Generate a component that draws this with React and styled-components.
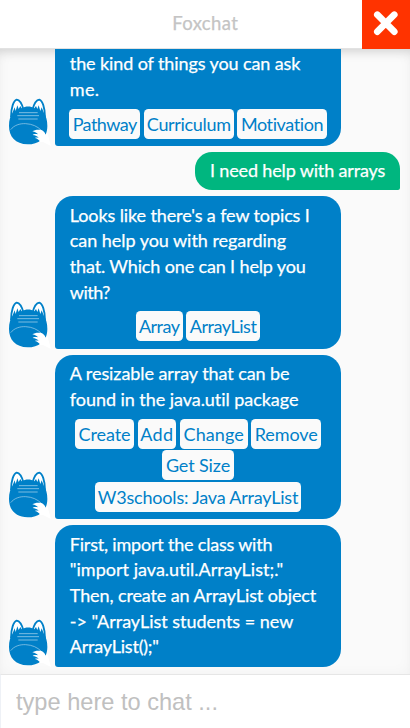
import React from 'react';
import styled, { createGlobalStyle } from 'styled-components';

const BLUE = '#0080c8';

const GlobalStyle = createGlobalStyle`
  * { box-sizing: border-box; }
  body { margin: 0; background: #fff; }
`;

const Window = styled.div`
  width: 410px;
  height: 728px;
  display: flex;
  flex-direction: column;
  overflow: hidden;
  background: #fff;
  font-family: Lato, "Liberation Sans", sans-serif;
  font-size: 18px;
  line-height: 25.7px;
`;

const Header = styled.header`
  flex: none;
  height: 49px;
  display: grid;
  grid-template-columns: 361.5px 1fr;
  border-bottom: 1px solid #e2e2e2;
`;

const Title = styled.h1`
  margin: 0;
  padding: 0 0 0 49px;
  font-size: 18.5px;
  font-weight: 400;
  line-height: 47px;
  letter-spacing: 0.4px;
  text-align: center;
  color: #c4c4c4;
  -webkit-text-stroke: 0.25px #c4c4c4;
`;

const CloseButton = styled.button`
  height: 48.5px;
  padding: 0;
  border: 0;
  display: grid;
  place-items: center;
  background: #ff3300;
`;

const Messages = styled.main`
  flex: none;
  height: 625px;
  padding: 0 10px 7.4px 8px;
  display: flex;
  flex-direction: column;
  justify-content: flex-end;
  gap: 6px;
  overflow: hidden;
  background: #fafafa;
  box-shadow: inset 0 10px 12px -8px rgba(0, 0, 0, 0.16), inset 0 0 14px rgba(0, 0, 0, 0.035);
`;

const BotRow = styled.div`
  flex: none;
  display: flex;
  align-items: flex-end;
  gap: 4.3px;
`;

const Avatar = styled.svg`
  flex: none;
  display: block;
  width: 43px;
  height: 48px;
`;

const Bubble = styled.div`
  width: 285.4px;
  padding: ${(p) => (p.$scrolled ? '40px' : '6.5px')} 14.5px 6.5px;
  border-radius: 18px 18px 18px 3px;
  color: #fff;
  background: ${BLUE};
`;

const UserBubble = styled.div`
  flex: none;
  align-self: flex-end;
  width: 205px;
  height: 38.3px;
  padding: 6.3px 0 0 15px;
  border-radius: 17px 17px 2px 17px;
  color: #fff;
  background: #00b67f;
`;

const Line = styled.span`
  display: block;
  white-space: pre;
  letter-spacing: ${(p) => p.$track}px;
  -webkit-text-stroke: 0.25px #fff;
`;

const Options = styled.div`
  margin: 6px -10px 0.8px;
  display: flex;
  flex-direction: column;
  gap: 1.6px;
`;

const OptionRow = styled.div`
  display: flex;
  justify-content: center;
  gap: 3.6px;
`;

const Option = styled.button`
  width: ${(p) => p.$width}px;
  height: 30px;
  padding: 0;
  border: 0;
  border-radius: 4.5px;
  font: inherit;
  line-height: 30px;
  letter-spacing: ${(p) => p.$track}px;
  text-align: center;
  white-space: nowrap;
  color: ${BLUE};
  background: #fafafa;
`;

const Footer = styled.footer`
  flex: 1;
  border-top: 1px solid #e6e6e6;
  border-left: 1px solid #eef1f6;
  display: flex;
`;

const Input = styled.input`
  flex: 1;
  min-width: 0;
  padding: 2px 0 0 15px;
  border: 0;
  outline: 0;
  font: 23.6px "Liberation Sans", Arial, sans-serif;
  background: transparent;
  &::placeholder { color: #c0c0c0; opacity: 1; }
`;

function Fox() {
  return (
    <Avatar viewBox="24 294 129 144">
      <path d="M118 400L140 392L153 438L122 422Z" fill="#fff" />
      <path d="M33 352C33 322 41 302 50 299C59 300 66 312 70 328M98 328C102 312 109 300 118 299C127 302 135 322 135 352" fill="#fff" stroke={BLUE} strokeWidth="5.5" />
      <path d="M27 378C27 360 31 348 37 339L44 322L47 333L52 316L56 327L61 318L65 325C77 318 92 318 103 325L108 318L112 327L116 316L121 333L125 322L132 339C138 348 142 360 142 378C142 389 140 397 137 404C133 397 128 393 122 391L118 396L124 419C113 429 99 433 83 433C46 432 27 410 27 378Z" fill={BLUE} />
      <path d="M57 338H113M52 347H117M55 357H113" stroke="#a9d3eb" strokeWidth="2.2" fill="none" />
      <path d="M32 389C42 376 59 370 77 371C97 372 112 379 124 391" fill="none" stroke="#a9d3eb" strokeWidth="2" />
      <path d="M124 390C113 388 103 390 97 394C105 396 111 399 114 403C107 401 101 402 98 405C106 406 113 409 116 414C111 412 108 412 105 414C112 416 117 420 121 426L137 424L136 402C133 396 129 392 124 390Z" fill="#fff" />
    </Avatar>
  );
}

const conversation = [
  {
    scrolled: true,
    lines: [['the kind of things you can ask', -0.1], ['me.', 0.3]],
    options: [[['Pathway', 71, -0.55], ['Curriculum', 90, -0.33], ['Motivation', 89.5, -0.39]]],
  },
  { user: true, lines: [['I need help with arrays', -0.15]] },
  {
    lines: [
      ["Looks like there's a few topics I", -0.11],
      ['can help you with regarding', -0.04],
      ['that. Which one can I help you', -0.14],
      ['with?', -0.5],
    ],
    options: [[['Array', 46.7, -0.5], ['ArrayList', 74, -0.45]]],
  },
  {
    lines: [['A resizable array that can be', -0.07], ['found in the java.util package', -0.05]],
    options: [
      [['Create', 59, -0.1], ['Add', 38.6, 0.4], ['Change', 68, 0.1], ['Remove', 69.7, -0.08]],
      [['Get Size', 72, -0.12]],
      [['W3schools: Java ArrayList', 206.3, -0.2]],
    ],
  },
  {
    lines: [
      ['First, import the class with', -0.2],
      ['"import java.util.ArrayList;."', 0.02],
      ['Then, create an ArrayList object', -0.11],
      ['-> "ArrayList students = new', -0.02],
      ['ArrayList();"', -0.21],
    ],
  },
];

function Message({ user, scrolled, lines, options }) {
  const text = lines.map(([t, track]) => <Line key={t} $track={track}>{t}</Line>);
  if (user) return <UserBubble>{text}</UserBubble>;
  return (
    <BotRow>
      <Fox />
      <Bubble $scrolled={scrolled}>
        {text}
        {options && (
          <Options>
            {options.map((row) => (
              <OptionRow key={row[0][0]}>
                {row.map(([label, width, track]) => (
                  <Option key={label} $width={width} $track={track}>{label}</Option>
                ))}
              </OptionRow>
            ))}
          </Options>
        )}
      </Bubble>
    </BotRow>
  );
}

export default function App() {
  return (
    <>
      <GlobalStyle />
      <Window>
        <Header>
          <Title>Foxchat</Title>
          <CloseButton aria-label="Close">
            <svg width="26" height="26" viewBox="0 0 26 26">
              <path d="M4.3 3.7L21.3 20.7M21.3 3.7L4.3 20.7" stroke="#fff" strokeWidth="6.6" strokeLinecap="round" />
            </svg>
          </CloseButton>
        </Header>
        <Messages>
          {conversation.map((m) => <Message key={m.lines[0][0]} {...m} />)}
        </Messages>
        <Footer>
          <Input placeholder="type here to chat ..." />
        </Footer>
      </Window>
    </>
  );
}
